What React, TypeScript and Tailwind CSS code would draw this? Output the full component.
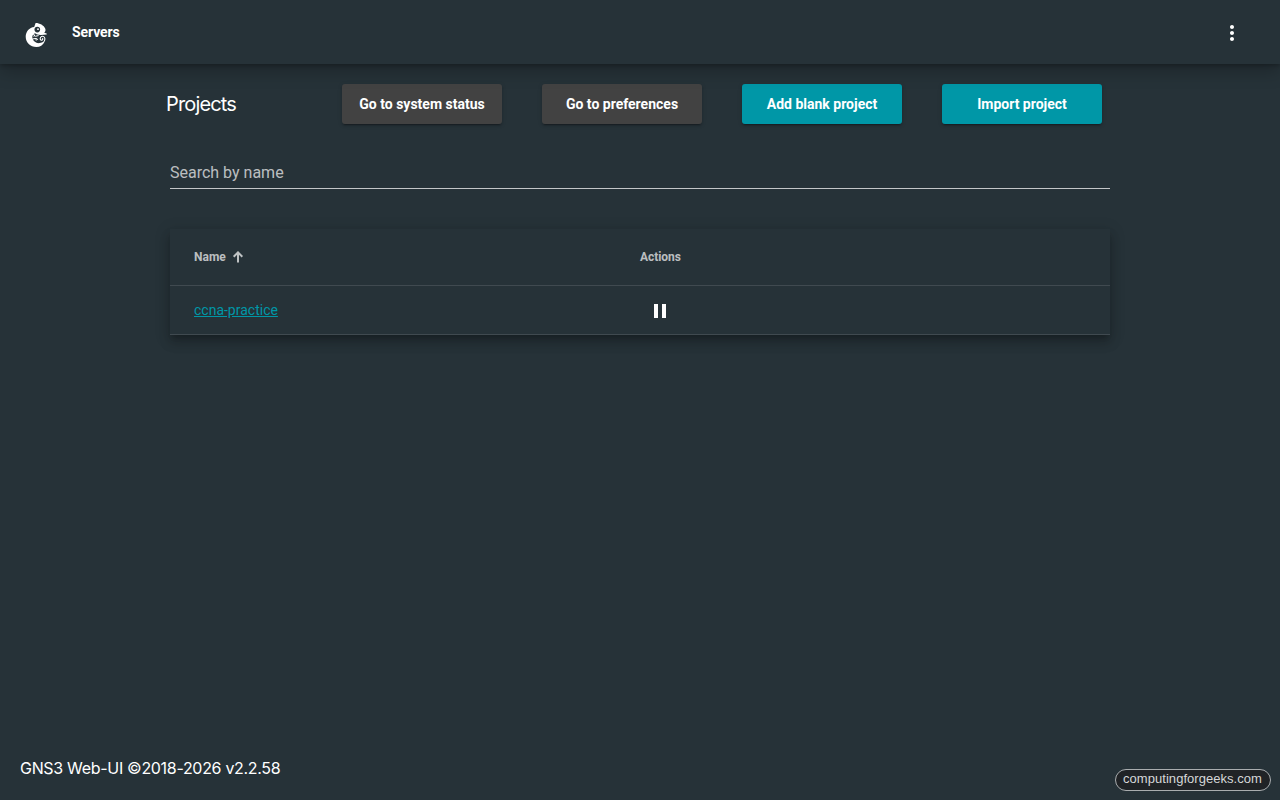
import React from "react";

const actions = [
    { label: "Go to system status", color: "bg-[#424242]" },
    { label: "Go to preferences", color: "bg-[#424242]" },
    { label: "Add blank project", color: "bg-[#0097a7]" },
    { label: "Import project", color: "bg-[#0097a7]" },
];

const projects = [{ name: "ccna-practice" }];

function Logo() {
    return (
        <svg width="24" height="26" viewBox="0 0 24 26" fill="none">
            <path
                fill="#fff"
                d="M11.6 1 C15.7 1 19.8 3.2 21.3 6.8 C21.9 8.6 21.2 9.8 20.2 10.7 L22.7 11.5 V12.6 L17 12.9 C14.4 13 12.4 12.2 11 11.2 C8.6 12.2 7.8 14.4 8.6 16.8 C9.5 19.4 11.8 21 14.4 21.2 L20.4 20 C19 23.1 16.1 25 12.4 25 C6.3 25 1.7 20.6 1.7 14.8 C1.7 9.4 5.4 5.4 10.2 4.9 Z"
            />
            <circle cx="13.3" cy="7.6" r="2.8" fill="#263238" />
            <circle cx="14" cy="7.2" r="0.9" fill="#fff" />
            <path d="M7.6 12.4 L10.8 13 L9.8 14.8 M11.2 14.3 L14.6 13.6 M8.3 17 L12 16.4 L14 17.6 M12 16.6 L12.2 18.6" stroke="#fff" strokeWidth="1" />
            <path d="M13.6 22.3 C18 22.7 20.9 20 20.9 17 C20.9 14.8 19.1 13.8 17.6 14.5 C15.8 15.3 15.7 17.8 17.3 18.2 C18.7 18.5 19.3 16.9 18.3 16.3" stroke="#fff" strokeWidth="1.1" />
        </svg>
    );
}

function Header() {
    return (
        <header className="relative flex h-16 justify-between bg-[#263238] pl-6 pr-9 shadow-[0_8px_16px_rgba(0,0,0,0.22),0_2px_4px_rgba(0,0,0,0.22)]">
            <div className="flex">
                <div className="pt-[22px]">
                    <Logo />
                </div>
                <a className="ml-6 pt-[22px] text-sm leading-5 font-bold tracking-[-0.1px]">Servers</a>
            </div>
            <button className="flex h-[66px] w-6 items-center">
                <svg width="24" height="24" viewBox="0 0 24 24" fill="#fff">
                    <path d="M12 8c1.1 0 2-.9 2-2s-.9-2-2-2-2 .9-2 2 .9 2 2 2zm0 2c-1.1 0-2 .9-2 2s.9 2 2 2 2-.9 2-2-.9-2-2-2zm0 6c-1.1 0-2 .9-2 2s.9 2 2 2 2-.9 2-2-.9-2-2-2z" />
                </svg>
            </button>
        </header>
    );
}

function ProjectsTable() {
    return (
        <div className="mt-10 shadow-[0_5px_5px_-3px_rgba(0,0,0,0.2),0_8px_10px_1px_rgba(0,0,0,0.14),0_3px_14px_2px_rgba(0,0,0,0.12)]">
            <div className="flex h-[57px] items-center border-b border-white/12 px-6 text-xs font-bold text-white/70">
                <div className="flex w-[446px] items-center">
                    Name
                    <svg className="ml-1.5" width="12" height="12" viewBox="0 0 12 12" fill="none" stroke="currentColor" strokeWidth="2">
                        <path d="M6 11.5V1.5M1.7 5.7L6 1.4L10.3 5.7" />
                    </svg>
                </div>
                <div className="tracking-[-0.05px]">Actions</div>
            </div>
            {projects.map((project) => (
                <div key={project.name} className="flex h-[49px] items-center border-b border-white/12 px-6 text-sm">
                    <div className="w-[446px]">
                        <a className="text-[#0097a7] underline">{project.name}</a>
                    </div>
                    <button className="flex h-10 w-10 items-center justify-center">
                        <svg className="mt-0.5" width="24" height="24" viewBox="0 0 24 24" fill="#fff">
                            <path d="M6 19h4V5H6v14zm8-14v14h4V5h-4z" />
                        </svg>
                    </button>
                </div>
            ))}
        </div>
    );
}

export default function App() {
    return (
        <div className="flex h-screen flex-col overflow-hidden bg-[#263238] font-['Roboto',sans-serif] text-white">
            <Header />
            <main className="mx-auto w-[940px] flex-1 pt-5">
                <div className="flex h-10 items-center">
                    <h1 className="-ml-1 w-44 font-['Inter',sans-serif] text-xl tracking-[-0.85px]">Projects</h1>
                    <div className="flex gap-10">
                        {actions.map((action) => (
                            <button
                                key={action.label}
                                className={`h-10 w-40 rounded-[3px] text-sm font-bold shadow-[0_3px_1px_-2px_rgba(0,0,0,0.2),0_2px_2px_0_rgba(0,0,0,0.14),0_1px_5px_0_rgba(0,0,0,0.12)] ${action.color}`}
                            >
                                {action.label}
                            </button>
                        ))}
                    </div>
                </div>
                <input
                    className="mt-8 block h-[33px] w-full border-b border-[#c3c6c8] bg-transparent text-base outline-none placeholder:text-white/70"
                    placeholder="Search by name"
                />
                <ProjectsTable />
            </main>
            <footer className="flex h-[62px] justify-between pl-5 pr-[9px]">
                <div className="pt-[18px] font-['Inter',sans-serif] text-base leading-6 tracking-[-0.31px]">GNS3 Web-UI ©2018-2026 v2.2.58</div>
                <div className="mt-[31px] flex h-[22px] w-[156px] items-center justify-center rounded-full border border-[#a9adaf] bg-[#202326] pr-px pb-0.5 font-['Liberation_Sans',sans-serif] text-[13px] tracking-[0.04px] text-[#d5d7d8]">
                    computingforgeeks.com
                </div>
            </footer>
        </div>
    );
}
